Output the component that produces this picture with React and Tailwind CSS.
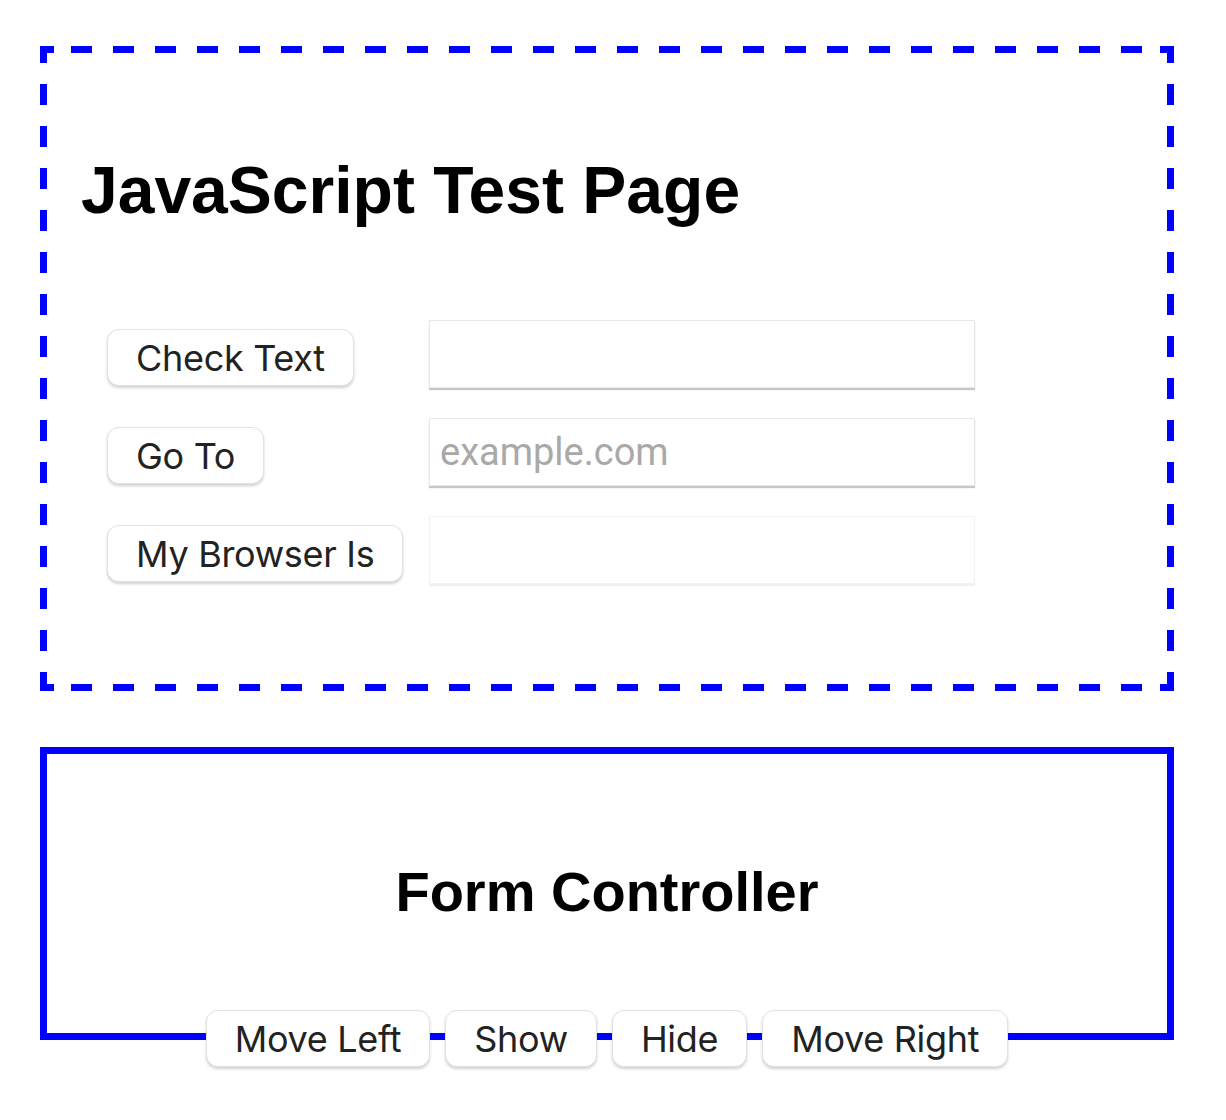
const rows = [
  { label: "Check Text", placeholder: "", faint: false },
  { label: "Go To", placeholder: "example.com", faint: false },
  { label: "My Browser Is", placeholder: "", faint: true },
];

function PillButton({ children }) {
  return (
    <button
      type="button"
      className="h-[57px] px-[28px] rounded-[12px] border border-[#e2e2e2] bg-white text-[36px] leading-none tracking-[-0.3px] text-[#222] shadow-[0_2px_3px_rgba(0,0,0,0.18)] whitespace-nowrap font-['Inter',sans-serif]"
    >
      {children}
    </button>
  );
}

export default function App() {
  return (
    <div className="min-h-[1120px] bg-white pt-[46px] font-['Liberation_Sans',Arial,sans-serif]">
      {/* TEST PAGE BOX - dashes drawn as gradients to match the long dash pattern */}
      <div className="ml-[40px] w-[1134px] border-[7px] border-transparent pt-[104px] pb-[100px] pl-[34px] bg-no-repeat [background-origin:border-box] [background-image:repeating-linear-gradient(90deg,#0000ff_0_10px,transparent_10px_31px,#0000ff_31px_42px),repeating-linear-gradient(90deg,#0000ff_0_10px,transparent_10px_31px,#0000ff_31px_42px),linear-gradient(90deg,#0000ff_0_14px,transparent_14px_calc(100%_-_14px),#0000ff_calc(100%_-_14px)),linear-gradient(90deg,#0000ff_0_14px,transparent_14px_calc(100%_-_14px),#0000ff_calc(100%_-_14px)),repeating-linear-gradient(180deg,#0000ff_0_17px,transparent_17px_38px,#0000ff_38px_42px),repeating-linear-gradient(180deg,#0000ff_0_17px,transparent_17px_38px,#0000ff_38px_42px)] [background-size:100%_7px,100%_7px,100%_7px,100%_7px,7px_100%,7px_100%] [background-position:left_top,left_bottom,left_top,left_bottom,left_top,right_top]">
        <h1 className="text-[66px] leading-none font-bold text-black">
          JavaScript Test Page
        </h1>

        <div className="mt-[97px] ml-[26px] flex flex-col gap-[30px]">
          {rows.map((row) => (
            <div key={row.label} className="flex items-center h-[68px]">
              <div className="w-[322px] flex items-center mt-[7px]">
                <PillButton>{row.label}</PillButton>
              </div>
              <input
                type="text"
                placeholder={row.placeholder}
                className={`w-[546px] h-[68px] bg-white px-[10px] text-[38px] font-['Roboto',sans-serif] text-[#222] placeholder:text-[#a9a9a9] outline-none border ${
                  row.faint
                    ? "border-[#f3f3f3] shadow-[0_2px_1px_rgba(0,0,0,0.06)]"
                    : "border-[#e8e8e8] shadow-[0_2px_1px_rgba(0,0,0,0.22)]"
                }`}
              />
            </div>
          ))}
        </div>
      </div>

      {/* FORM CONTROLLER BOX */}
      <div className="ml-[40px] mt-[56px] w-[1134px] border-[7px] border-solid border-[#0000ff] pt-[110px]">
        <h2 className="text-[56px] leading-none font-bold text-black text-center">
          Form Controller
        </h2>
        <div className="mt-[90px] -mb-[34px] flex justify-center gap-[15px]">
          <PillButton>Move Left</PillButton>
          <PillButton>Show</PillButton>
          <PillButton>Hide</PillButton>
          <PillButton>Move Right</PillButton>
        </div>
      </div>
    </div>
  );
}
